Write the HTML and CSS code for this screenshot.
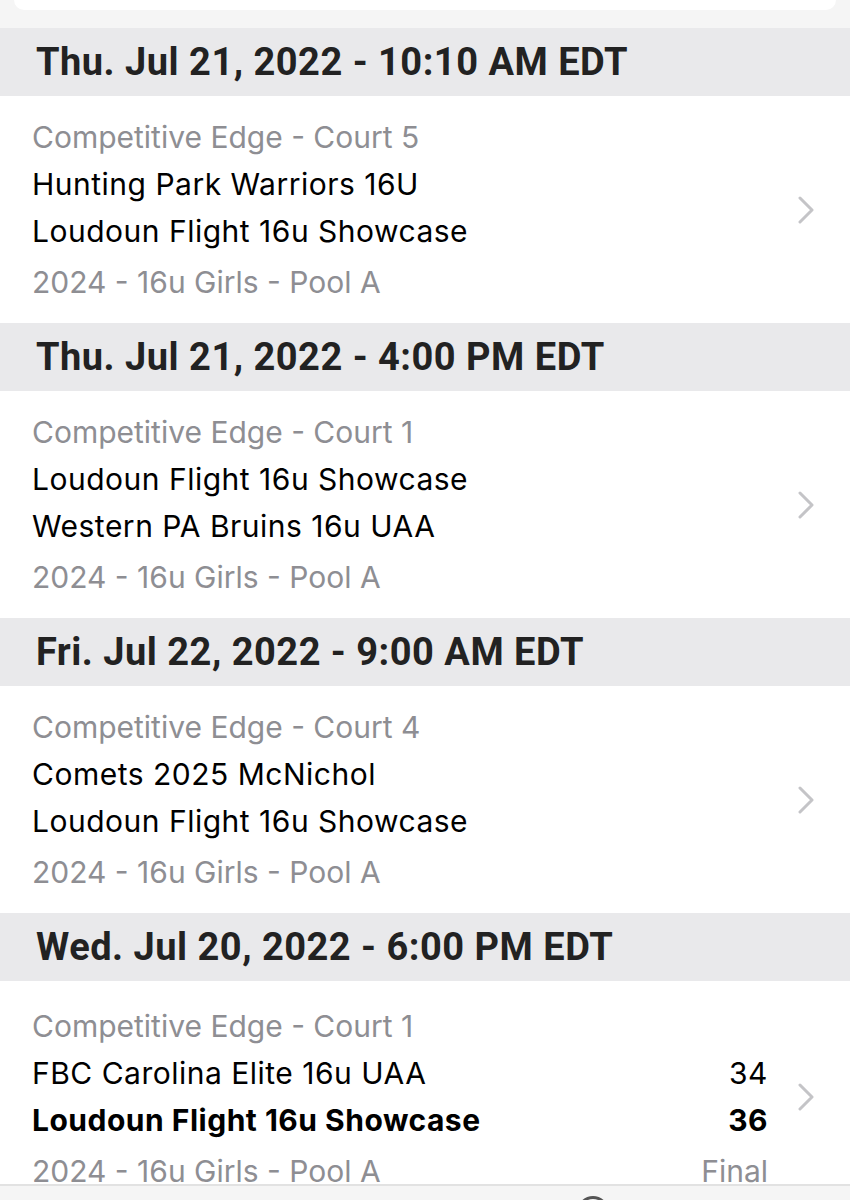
FILE: index.html
```html
<!DOCTYPE html>
<html lang="en">
<head>
    <meta charset="UTF-8">
    <meta name="viewport" content="width=device-width, initial-scale=1.0">
    <title>Schedule</title>
    <link rel="stylesheet" href="styles.css">
</head>
<body>
    <div class="screen">
        <!-- search card, scrolled mostly off the top -->
        <div class="top-card"></div>

        <div class="day-header">Thu. Jul 21, 2022 - 10:10 AM EDT</div>
        <div class="game">
            <div class="game-info">
                <div class="venue">Competitive Edge - Court 5</div>
                <div class="team">Hunting Park Warriors 16U</div>
                <div class="team">Loudoun Flight 16u Showcase</div>
                <div class="division">2024 - 16u Girls - Pool A</div>
            </div>
            <svg class="chevron" viewBox="0 0 18 28"><path d="M3 2 L15 14 L3 26" /></svg>
        </div>

        <div class="day-header">Thu. Jul 21, 2022 - 4:00 PM EDT</div>
        <div class="game">
            <div class="game-info">
                <div class="venue">Competitive Edge - Court 1</div>
                <div class="team">Loudoun Flight 16u Showcase</div>
                <div class="team">Western PA Bruins 16u UAA</div>
                <div class="division">2024 - 16u Girls - Pool A</div>
            </div>
            <svg class="chevron" viewBox="0 0 18 28"><path d="M3 2 L15 14 L3 26" /></svg>
        </div>

        <div class="day-header">Fri. Jul 22, 2022 - 9:00 AM EDT</div>
        <div class="game">
            <div class="game-info">
                <div class="venue">Competitive Edge - Court 4</div>
                <div class="team">Comets 2025 McNichol</div>
                <div class="team">Loudoun Flight 16u Showcase</div>
                <div class="division">2024 - 16u Girls - Pool A</div>
            </div>
            <svg class="chevron" viewBox="0 0 18 28"><path d="M3 2 L15 14 L3 26" /></svg>
        </div>

        <div class="day-header">Wed. Jul 20, 2022 - 6:00 PM EDT</div>
        <div class="game game-last">
            <div class="game-info">
                <div class="venue">Competitive Edge - Court 1</div>
                <div class="team"><span>FBC Carolina Elite 16u UAA</span><span class="score">34</span></div>
                <div class="team winner"><span>Loudoun Flight 16u Showcase</span><span class="score">36</span></div>
                <div class="division"><span>2024 - 16u Girls - Pool A</span><span class="status">Final</span></div>
            </div>
            <svg class="chevron" viewBox="0 0 18 28"><path d="M3 2 L15 14 L3 26" /></svg>
        </div>

        <div class="tab-bar">
            <span class="tab-icon"></span>
        </div>
    </div>
</body>
</html>
```

FILE: styles.css
```css
/* schedule list */
body {
    margin: 0;
    padding: 0;
    background-color: #f5f5f5;
    font-family: Inter, "Liberation Sans", Arial, sans-serif;
}

.screen {
    width: 850px;
    height: 1200px;
    overflow: hidden;
}

.top-card {
    height: 10px;
    margin: 0 14px 18px;
    background-color: #fff;
    border-radius: 0 0 16px 16px;
}

.day-header {
    height: 68px;
    padding-left: 36px;
    display: flex;
    align-items: center;
    background-color: #e9e9eb;
    color: #222;
    font-family: Roboto, "Liberation Sans", sans-serif;
    font-weight: 700;
    font-size: 38px;
    letter-spacing: 0.5px;
}

.game {
    height: 227px;
    display: flex;
    align-items: center;
    background-color: #fff;
    padding-left: 32px;
    padding-right: 35px;
}

.game-last {
    height: 203px;
    align-items: flex-start;
    border-bottom: 2px solid #e2e2e2;
}

.game-info {
    flex: 1;
    padding-top: 2px;
}

.game-last .game-info {
    padding-top: 22px;
}

.venue,
.team,
.division {
    display: flex;
    justify-content: space-between;
    font-size: 30px;
    line-height: 47px;
}

.venue,
.division {
    color: #8e8e93;
}

.division {
    line-height: 51px;
    margin-top: 2px;
}

.team {
    color: #000;
    letter-spacing: 0.5px;
}

.winner {
    font-weight: 700;
}

.score,
.status {
    margin-right: 29px;
}

.chevron {
    width: 18px;
    height: 28px;
    fill: none;
    stroke: #c4c4c7;
    stroke-width: 3;
    stroke-linecap: round;
    stroke-linejoin: round;
}

.game-last .chevron {
    margin-top: 102px;
}

.tab-bar {
    height: 20px;
    display: flex;
    justify-content: center;
    background-color: #f5f5f5;
}

.tab-icon {
    width: 26px;
    height: 26px;
    margin-top: 10px;
    margin-left: 336px;
    border-radius: 50%;
    border: 3px solid #555;
}
```
